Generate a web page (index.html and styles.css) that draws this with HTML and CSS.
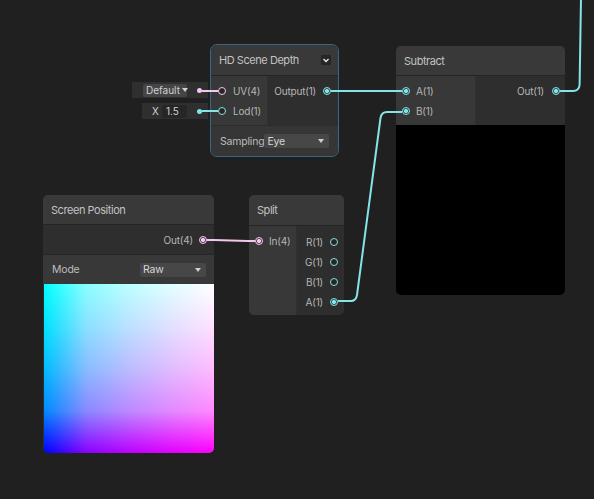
FILE: index.html
```html
<!DOCTYPE html>
<html lang="en">
<head>
    <meta charset="UTF-8">
    <title>Shader Graph</title>
    <link rel="stylesheet" href="styles.css">
</head>
<body>

<div class="graph">

    <!-- inline values feeding HD Scene Depth -->
    <div class="inline inline-uv">
        <span class="inline-box">Default<i class="tri"></i></span>
        <span class="inline-dot pink"></span>
    </div>
    <div class="inline inline-lod">
        <span class="inline-label">X</span>
        <span class="inline-field">1.5</span>
        <span class="inline-dot cyan"></span>
    </div>

    <div class="node depth selected">
        <div class="node-title">
            HD Scene Depth
            <span class="collapse">
                <svg width="10" height="10" viewBox="0 0 10 10"><path d="M2.5 4 L5 6.5 L7.5 4" fill="none" stroke="#e6e6e6" stroke-width="1.4"/></svg>
            </span>
        </div>
        <div class="ports">
            <div class="inputs">
                <div class="port-row"><span class="port pink"></span>UV(4)</div>
                <div class="port-row"><span class="port cyan"></span>Lod(1)</div>
            </div>
            <div class="outputs">
                <div class="port-row">Output(1)<span class="port cyan on"></span></div>
            </div>
        </div>
        <div class="settings">
            <span>Sampling</span>
            <span class="dropdown dd-eye">Eye<i class="tri"></i></span>
        </div>
    </div>

    <div class="node subtract">
        <div class="node-title">Subtract</div>
        <div class="ports">
            <div class="inputs">
                <div class="port-row"><span class="port cyan on"></span>A(1)</div>
                <div class="port-row"><span class="port cyan on"></span>B(1)</div>
            </div>
            <div class="outputs">
                <div class="port-row">Out(1)<span class="port cyan on"></span></div>
            </div>
        </div>
        <div class="preview preview-black"></div>
    </div>

    <div class="node screen-pos">
        <div class="node-title">Screen Position</div>
        <div class="out-row">Out(4)<span class="port pink on"></span></div>
        <div class="settings">
            <span>Mode</span>
            <span class="dropdown dd-raw">Raw<i class="tri"></i></span>
        </div>
        <div class="preview preview-uv"></div>
    </div>

    <div class="node split">
        <div class="node-title">Split</div>
        <div class="ports">
            <div class="inputs">
                <div class="port-row"><span class="port pink on"></span>In(4)</div>
            </div>
            <div class="outputs">
                <div class="port-row">R(1)<span class="port cyan"></span></div>
                <div class="port-row">G(1)<span class="port cyan"></span></div>
                <div class="port-row">B(1)<span class="port cyan"></span></div>
                <div class="port-row">A(1)<span class="port cyan on"></span></div>
            </div>
        </div>
    </div>

    <svg class="edges" width="594" height="499" viewBox="0 0 594 499">
        <path class="edge-pink" d="M202 91 H218"/>
        <path class="edge-cyan" d="M202 111 H218"/>
        <path class="edge-cyan" d="M331 91 H402"/>
        <path class="edge-cyan" d="M560 91 H573 Q579 91 579.6 85 L581 -2"/>
        <path class="edge-cyan" d="M338 301 H351 Q356 301 357 295 L380.5 118 Q381.5 112 387 112 H402"/>
        <path class="edge-pink" d="M207 240 H214 L248 241 H255"/>
    </svg>

</div>

</body>
</html>
```

FILE: styles.css
```css
body {
    margin: 0;
    padding: 0;
    background-color: #202020;
}

.graph {
    position: relative;
    width: 594px;
    height: 499px;
    overflow: hidden;
    background-color: #202020;
    font-family: Inter, "Noto Sans", sans-serif;
    color: #bdbdbd;
}

.edges {
    position: absolute;
    left: 0;
    top: 0;
    pointer-events: none;
}

.edges path {
    fill: none;
    stroke-width: 2;
}

.edge-cyan {
    stroke: #84e4e7;
}

.edge-pink {
    stroke: #f5c6ee;
}

/* nodes */

.node {
    position: absolute;
    box-sizing: border-box;
    display: flex;
    flex-direction: column;
    background-color: #2e2e2e;
    border-radius: 5px;
    overflow: hidden;
}

.node.selected {
    border: 1px solid #356884;
    border-radius: 7px;
}

.node-title {
    height: 29px;
    flex-shrink: 0;
    display: flex;
    align-items: center;
    justify-content: space-between;
    padding: 0 7px 0 8px;
    background-color: #393939;
    border-bottom: 1px solid #242424;
    font-size: 11px;
    letter-spacing: -0.45px;
    color: #c2c2c2;
}

.collapse {
    width: 10px;
    height: 10px;
    display: flex;
    background-color: #262626;
    border-radius: 1px;
}

.ports {
    display: flex;
}

.inputs {
    background-color: #383838;
    padding: 5px 0 4px 0;
    border-right: 1px solid #303030;
}

.outputs {
    flex: 1;
    background-color: #2e2e2e;
    padding: 5px 0 4px 0;
}

.port-row {
    height: 20px;
    display: flex;
    align-items: center;
    gap: 6px;
    font-size: 10px;
    letter-spacing: -0.2px;
    color: #b6b6b6;
}

.inputs .port-row {
    padding-left: 6px;
}

.outputs .port-row {
    justify-content: flex-end;
    padding-right: 6px;
}

.port {
    width: 8px;
    height: 8px;
    box-sizing: border-box;
    border-radius: 50%;
    border: 1.5px solid #84e4e7;
    background-color: #262626;
    flex-shrink: 0;
}

.port.pink {
    border-color: #f5c6ee;
}

.port.on {
    background: radial-gradient(circle, #84e4e7 0 1.8px, #2a4446 2.3px);
}

.port.pink.on {
    background: radial-gradient(circle, #f5c6ee 0 1.8px, #463a44 2.3px);
}

.settings {
    height: 29px;
    flex-shrink: 0;
    display: flex;
    align-items: center;
    justify-content: space-between;
    padding: 0 8px;
    background-color: #363636;
    border-top: 1px solid #2c2c2c;
    font-size: 10.5px;
    letter-spacing: -0.2px;
    color: #bdbdbd;
}

.dropdown {
    position: relative;
    height: 14px;
    box-sizing: border-box;
    display: flex;
    align-items: center;
    padding-left: 3px;
    background-color: #474747;
    border-radius: 2px;
    font-size: 10.5px;
    color: #d6d6d6;
}

.tri {
    width: 0;
    height: 0;
    border-left: 3.5px solid transparent;
    border-right: 3.5px solid transparent;
    border-top: 4px solid #cfcfcf;
}

.dropdown .tri {
    position: absolute;
    right: 5px;
    top: 5px;
}

.preview {
    flex-shrink: 0;
}

.preview-black {
    height: 170px;
    background-color: #000;
    border-radius: 0 0 4px 4px;
}

.preview-uv {
    height: 169px;
    margin-left: 1px;
    background:
        linear-gradient(to right, rgb(0, 0, 255), rgb(137, 0, 255) 25%, rgb(188, 0, 255) 50%, rgb(225, 0, 255) 75%, rgb(255, 0, 255)),
        linear-gradient(to bottom, rgb(0, 255, 255), rgb(0, 225, 255) 25%, rgb(0, 188, 255) 50%, rgb(0, 137, 255) 75%, rgb(0, 0, 255));
    background-blend-mode: screen;
    border-radius: 0 0 2px 2px;
}

/* HD Scene Depth */

.depth {
    left: 210px;
    top: 44px;
    width: 129px;
}

.depth .node-title {
    height: 30px;
}

.depth .inputs {
    width: 57px;
    box-sizing: border-box;
}

.depth .port-row {
    gap: 7px;
}

.depth .inputs .port-row {
    padding-left: 7px;
}

.depth .outputs .port-row {
    padding-right: 7px;
}

.depth .settings {
    height: 30px;
    padding: 0 9px 0 9px;
}

.dd-eye {
    width: 66px;
}

/* Subtract */

.subtract {
    left: 396px;
    top: 46px;
    width: 169px;
}

.subtract .inputs {
    width: 80px;
    box-sizing: border-box;
}

.subtract .outputs .port-row {
    padding-right: 5px;
    gap: 8px;
}

/* Screen Position */

.screen-pos {
    left: 43px;
    top: 195px;
    width: 171px;
}

.out-row {
    height: 29px;
    display: flex;
    align-items: center;
    justify-content: flex-end;
    gap: 6px;
    padding-right: 7px;
    background-color: #2e2e2e;
    font-size: 10px;
    letter-spacing: -0.2px;
    color: #b6b6b6;
}

.screen-pos .settings {
    padding: 0 8px 0 9px;
    background-color: #383838;
    border-top-color: #262626;
}

.dd-raw {
    width: 66px;
}

/* Split */

.split {
    left: 249px;
    top: 195px;
    width: 95px;
}

.split .node-title {
    height: 30px;
}

.split .ports {
    height: 89px;
}

.split .inputs {
    width: 48px;
    box-sizing: border-box;
}

.split .outputs {
    padding-top: 6px;
}

.split .outputs .port-row {
    gap: 7px;
}

/* inline values */

.inline {
    position: absolute;
    height: 16px;
    box-sizing: border-box;
    display: flex;
    align-items: center;
    background-color: #2f2f2f;
    font-size: 10px;
    color: #d0d0d0;
}

.inline-uv {
    left: 132px;
    top: 82px;
    width: 76px;
    padding-left: 11px;
}

.inline-lod {
    left: 142px;
    top: 103px;
    width: 66px;
    padding-left: 10px;
}

.inline-box {
    height: 13px;
    width: 44px;
    box-sizing: border-box;
    display: flex;
    align-items: center;
    gap: 2px;
    padding-left: 3px;
    background-color: #454545;
    border-radius: 2px;
}

.inline-label {
    width: 10px;
}

.inline-field {
    height: 13px;
    width: 25px;
    box-sizing: border-box;
    display: flex;
    align-items: center;
    padding-left: 4px;
    background-color: #262626;
    border-radius: 2px;
}

.inline-dot {
    width: 5px;
    height: 5px;
    border-radius: 50%;
    margin-left: auto;
    margin-right: 6px;
}

.inline-dot.pink {
    background-color: #f5c6ee;
}

.inline-dot.cyan {
    background-color: #84e4e7;
}
```
